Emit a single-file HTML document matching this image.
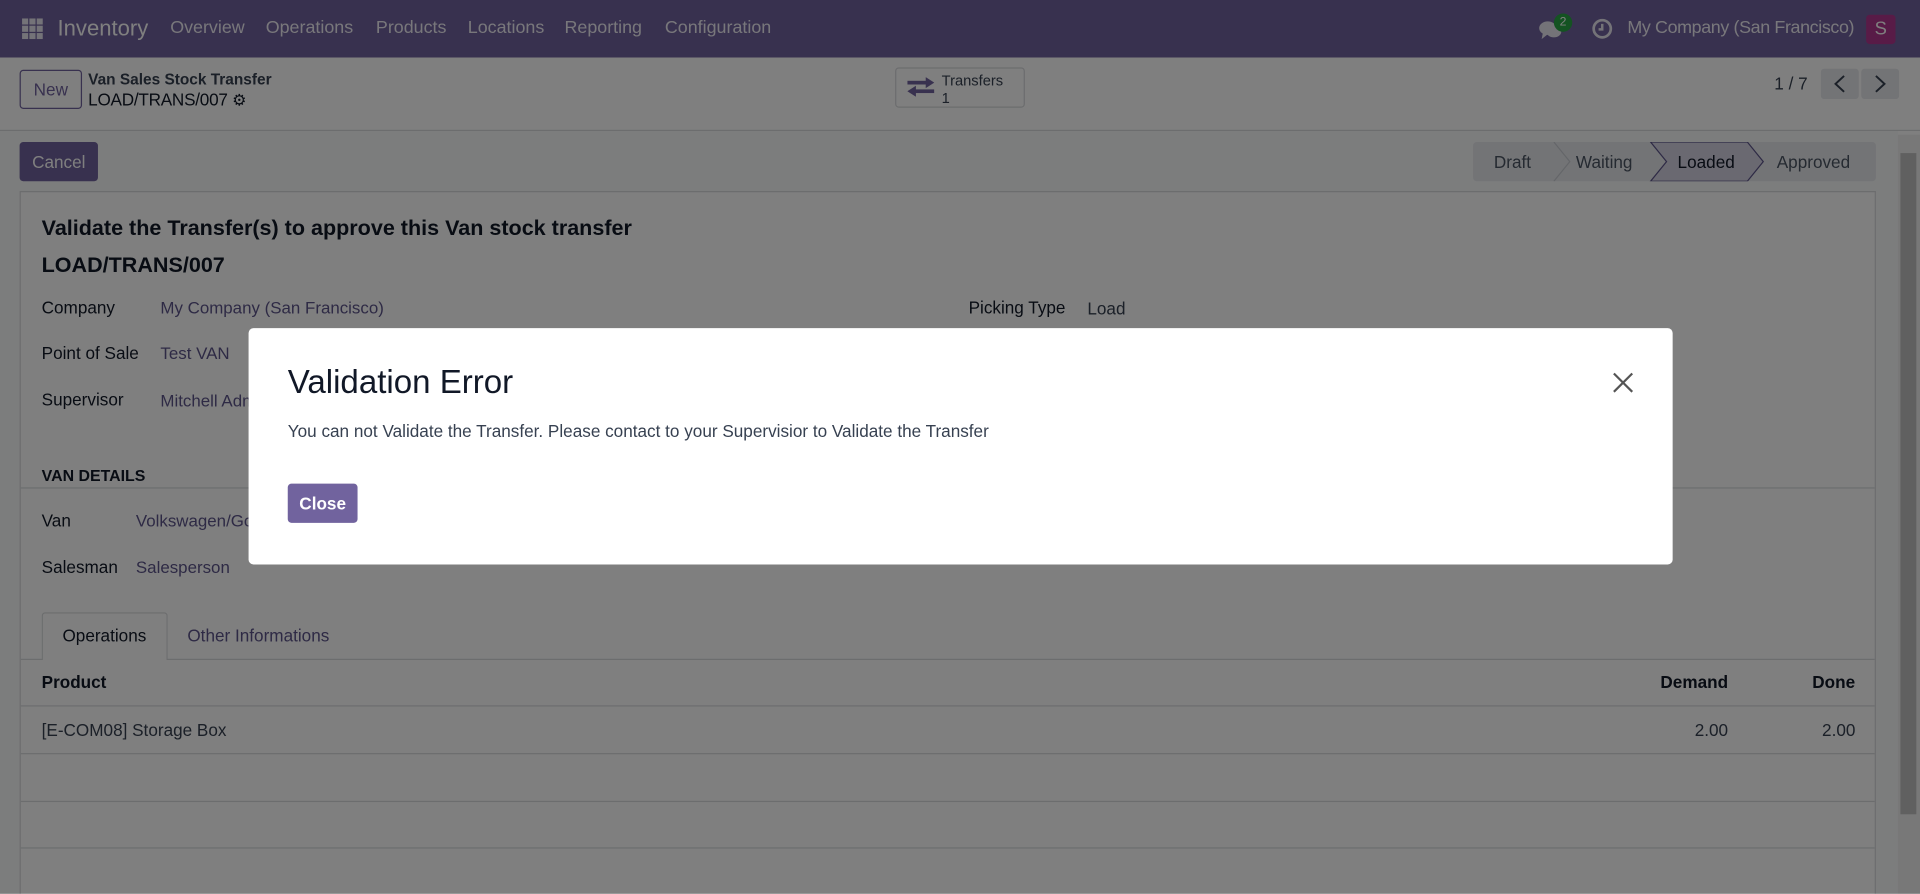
<!DOCTYPE html>
<html><head><meta charset="utf-8"><style>
*{box-sizing:border-box;margin:0;padding:0}
html,body{width:1920px;height:892px;overflow:hidden;background:#7c7d7d}
body{font-family:"Liberation Sans",sans-serif;color:#374151}
#w{position:absolute;left:0;top:0;width:1568px;height:730px;transform:scale(1.22449);transform-origin:0 0;background:#fff;overflow:hidden}
.a{position:absolute;white-space:nowrap}
.nav{left:0;top:0;width:1568px;height:47px;background:#71639e;color:#fff}
.nav .m{font-size:14.6px;top:15px;color:#f0eef6}
.lbl{font-size:14px;color:#111827}
.val{font-size:13.8px;color:#5d558a}
.ov{position:absolute;left:0;top:0;width:1568px;height:730px;background:rgba(0,0,0,.5)}
</style></head><body><div id="w">
<div class="a nav">
 <svg class="a" style="left:18px;top:15px" width="17" height="17" viewBox="0 0 17 17" fill="#e8e6f0"><rect x="0" y="0" width="5" height="5"/><rect x="6" y="0" width="5" height="5"/><rect x="12" y="0" width="5" height="5"/><rect x="0" y="6" width="5" height="5"/><rect x="6" y="6" width="5" height="5"/><rect x="12" y="6" width="5" height="5"/><rect x="0" y="12" width="5" height="5"/><rect x="6" y="12" width="5" height="5"/><rect x="12" y="12" width="5" height="5"/></svg>
 <div class="a" style="left:47px;top:13px;font-size:18px">Inventory</div>
 <div class="a m" style="left:139px">Overview</div>
 <div class="a m" style="left:217px">Operations</div>
 <div class="a m" style="left:307px">Products</div>
 <div class="a m" style="left:382px">Locations</div>
 <div class="a m" style="left:461px">Reporting</div>
 <div class="a m" style="left:543px">Configuration</div>
 <svg class="a" style="left:1256px;top:15px" width="22" height="20" viewBox="0 0 22 20" fill="#e8e6f0"><ellipse cx="8" cy="8" rx="7" ry="5.5"/><path d="M4 12 L3 17 L8 13Z"/><ellipse cx="13" cy="11" rx="6" ry="4.5"/></svg>
 <div class="a" style="left:1269px;top:11px;width:15px;height:15px;border-radius:8px;background:#28a745;color:#fff;font-size:10px;text-align:center;line-height:15px">2</div>
 <svg class="a" style="left:1300px;top:15px" width="17" height="17" viewBox="0 0 17 17"><circle cx="8.5" cy="8.5" r="7" fill="none" stroke="#e8e6f0" stroke-width="2.2"/><path d="M8.5 4.5V9H5.5" stroke="#e8e6f0" stroke-width="2" fill="none"/></svg>
 <div class="a" style="left:1329px;top:15px;font-size:14.6px;letter-spacing:-0.3px;color:#f0eef6">My Company (San Francisco)</div>
 <div class="a" style="left:1524px;top:12px;width:24px;height:24px;background:#b0368f;border-radius:3px;color:#fff;font-size:15px;text-align:center;line-height:24px">S</div>
</div>
<div class="a" style="left:0;top:47px;width:1568px;height:60px;background:#fff;border-bottom:1px solid #d8dadd"></div>
<div class="a" style="left:16px;top:57px;width:51px;height:32px;border:1px solid #71639e;border-radius:3px;color:#71639e;font-size:14px;text-align:center;line-height:30px">New</div>
<div class="a" style="left:72px;top:58px;font-size:12.6px;font-weight:bold;color:#374151">Van Sales Stock Transfer</div>
<div class="a" style="left:72px;top:73px;font-size:14px;letter-spacing:-0.2px;color:#111827">LOAD/TRANS/007 <span style="font-size:13px">⚙</span></div>
<div class="a" style="left:731px;top:55px;width:106px;height:33px;border:1px solid #d8dadd;border-radius:3px"></div>
<svg class="a" style="left:741px;top:63px" width="22" height="16" viewBox="0 0 22 16" fill="#71639e"><rect x="0" y="3" width="16" height="3"/><path d="M15 0L22 4.5L15 9Z"/><rect x="6" y="10" width="16" height="3"/><path d="M7 7L0 11.5L7 16Z"/></svg>
<div class="a" style="left:769px;top:59px;font-size:12px;color:#374151;line-height:14px">Transfers<br>1</div>
<div class="a" style="left:1449px;top:60px;font-size:14px;color:#374151">1 / 7</div>
<svg class="a" style="left:1487px;top:56px" width="64" height="25"><rect x="0" y="0" width="31" height="25" rx="3" fill="#e7e9ed"/><rect x="33" y="0" width="31" height="25" rx="3" fill="#e7e9ed"/><path d="M19 6L12 12.5L19 19" stroke="#374151" stroke-width="1.6" fill="none"/><path d="M45 6L52 12.5L45 19" stroke="#374151" stroke-width="1.6" fill="none"/></svg>
<div class="a" style="left:0;top:107px;width:1550px;height:623px;background:#f9fafb"></div>
<div class="a" style="left:16px;top:116px;width:64px;height:32px;background:#71639e;border-radius:3px;color:#fff;font-size:14px;text-align:center;line-height:32px">Cancel</div>
<div class="a" style="left:1203px;top:116px;width:329px;height:32px;background:#e7e9ed;border-radius:3px"></div>
<svg class="a" style="left:1203px;top:116px" width="329" height="32"><path d="M66 0L79 16L66 32" stroke="#c9ccd2" fill="none"/><path d="M145 0L224 0L237 16L224 32L145 32L158 16Z" fill="#d5d2e3" stroke="#5d558a"/></svg>
<div class="a" style="left:1220px;top:124px;font-size:14px;color:#4b5563">Draft</div>
<div class="a" style="left:1287px;top:124px;font-size:14px;color:#4b5563">Waiting</div>
<div class="a" style="left:1370px;top:124px;font-size:14px;color:#111827">Loaded</div>
<div class="a" style="left:1451px;top:124px;font-size:14px;color:#4b5563">Approved</div>
<div class="a" style="left:1550px;top:110px;width:18px;height:620px;background:#f1f1f1"></div>
<div class="a" style="left:1552px;top:125px;width:13px;height:540px;background:#c1c1c1"></div>
<div class="a" style="left:16px;top:156px;width:1516px;height:600px;background:#fff;border:1px solid #d8dadd"></div>
<div class="a" style="left:34px;top:176px;font-size:17.6px;font-weight:bold;color:#111827">Validate the Transfer(s) to approve this Van stock transfer</div>
<div class="a" style="left:34px;top:206px;font-size:17.6px;font-weight:bold;color:#111827">LOAD/TRANS/007</div>
<div class="a lbl" style="left:34px;top:243px">Company</div><div class="a val" style="left:131px;top:244px">My Company (San Francisco)</div>
<div class="a lbl" style="left:34px;top:280px">Point of Sale</div><div class="a val" style="left:131px;top:281px">Test VAN</div>
<div class="a lbl" style="left:34px;top:318px">Supervisor</div><div class="a val" style="left:131px;top:320px">Mitchell Admin</div>
<div class="a lbl" style="left:791px;top:243px">Picking Type</div><div class="a" style="left:888px;top:244px;font-size:14px;color:#374151">Load</div>
<div class="a" style="left:34px;top:381px;font-size:13px;font-weight:bold;color:#111827">VAN DETAILS</div>
<div class="a" style="left:17px;top:398px;width:1514px;height:1px;background:#d8dadd"></div>
<div class="a lbl" style="left:34px;top:417px">Van</div><div class="a val" style="left:111px;top:418px">Volkswagen/Golf</div>
<div class="a lbl" style="left:34px;top:455px">Salesman</div><div class="a val" style="left:111px;top:456px">Salesperson</div>
<div class="a" style="left:17px;top:538px;width:1514px;height:1px;background:#d8dadd"></div>
<div class="a" style="left:34px;top:500px;width:103px;height:39px;background:#fff;border:1px solid #d8dadd;border-bottom:none;border-radius:3px 3px 0 0"></div>
<div class="a" style="left:51px;top:511px;font-size:14px;color:#111827">Operations</div>
<div class="a" style="left:153px;top:511px;font-size:14px;color:#5d558a">Other Informations</div>
<div class="a" style="left:34px;top:549px;font-size:14px;font-weight:bold;color:#111827">Product</div>
<div class="a" style="left:1356px;top:549px;font-size:14px;font-weight:bold;color:#111827">Demand</div>
<div class="a" style="left:1480px;top:549px;font-size:14px;font-weight:bold;color:#111827">Done</div>
<div class="a" style="left:17px;top:576px;width:1514px;height:1px;background:#d8dadd"></div>
<div class="a" style="left:34px;top:588px;font-size:14px;color:#374151">[E-COM08] Storage Box</div>
<div class="a" style="left:1384px;top:588px;font-size:14px;color:#374151">2.00</div>
<div class="a" style="left:1488px;top:588px;font-size:14px;color:#374151">2.00</div>
<div class="a" style="left:17px;top:615px;width:1514px;height:1px;background:#d8dadd"></div>
<div class="a" style="left:17px;top:654px;width:1514px;height:1px;background:#d8dadd"></div>
<div class="a" style="left:17px;top:692px;width:1514px;height:1px;background:#d8dadd"></div>
<div class="ov"></div>
<div class="a" style="left:203px;top:268px;width:1163px;height:193px;background:#fff;border-radius:4px"></div>
<div class="a" style="left:235px;top:297px;font-size:27px;color:#111827">Validation Error</div>
<svg class="a" style="left:1317px;top:304px" width="17" height="17" viewBox="0 0 17 17"><path d="M1 1L16 16M16 1L1 16" stroke="#555" stroke-width="1.8"/></svg>
<div class="a" style="left:235px;top:344px;font-size:14px;color:#374151">You can not Validate the Transfer. Please contact to your Supervisior to Validate the Transfer</div>
<div class="a" style="left:235px;top:395px;width:57px;height:32px;background:#71639e;border-radius:3px;color:#fff;font-size:14px;font-weight:bold;text-align:center;line-height:32px">Close</div>
</div></body></html>
